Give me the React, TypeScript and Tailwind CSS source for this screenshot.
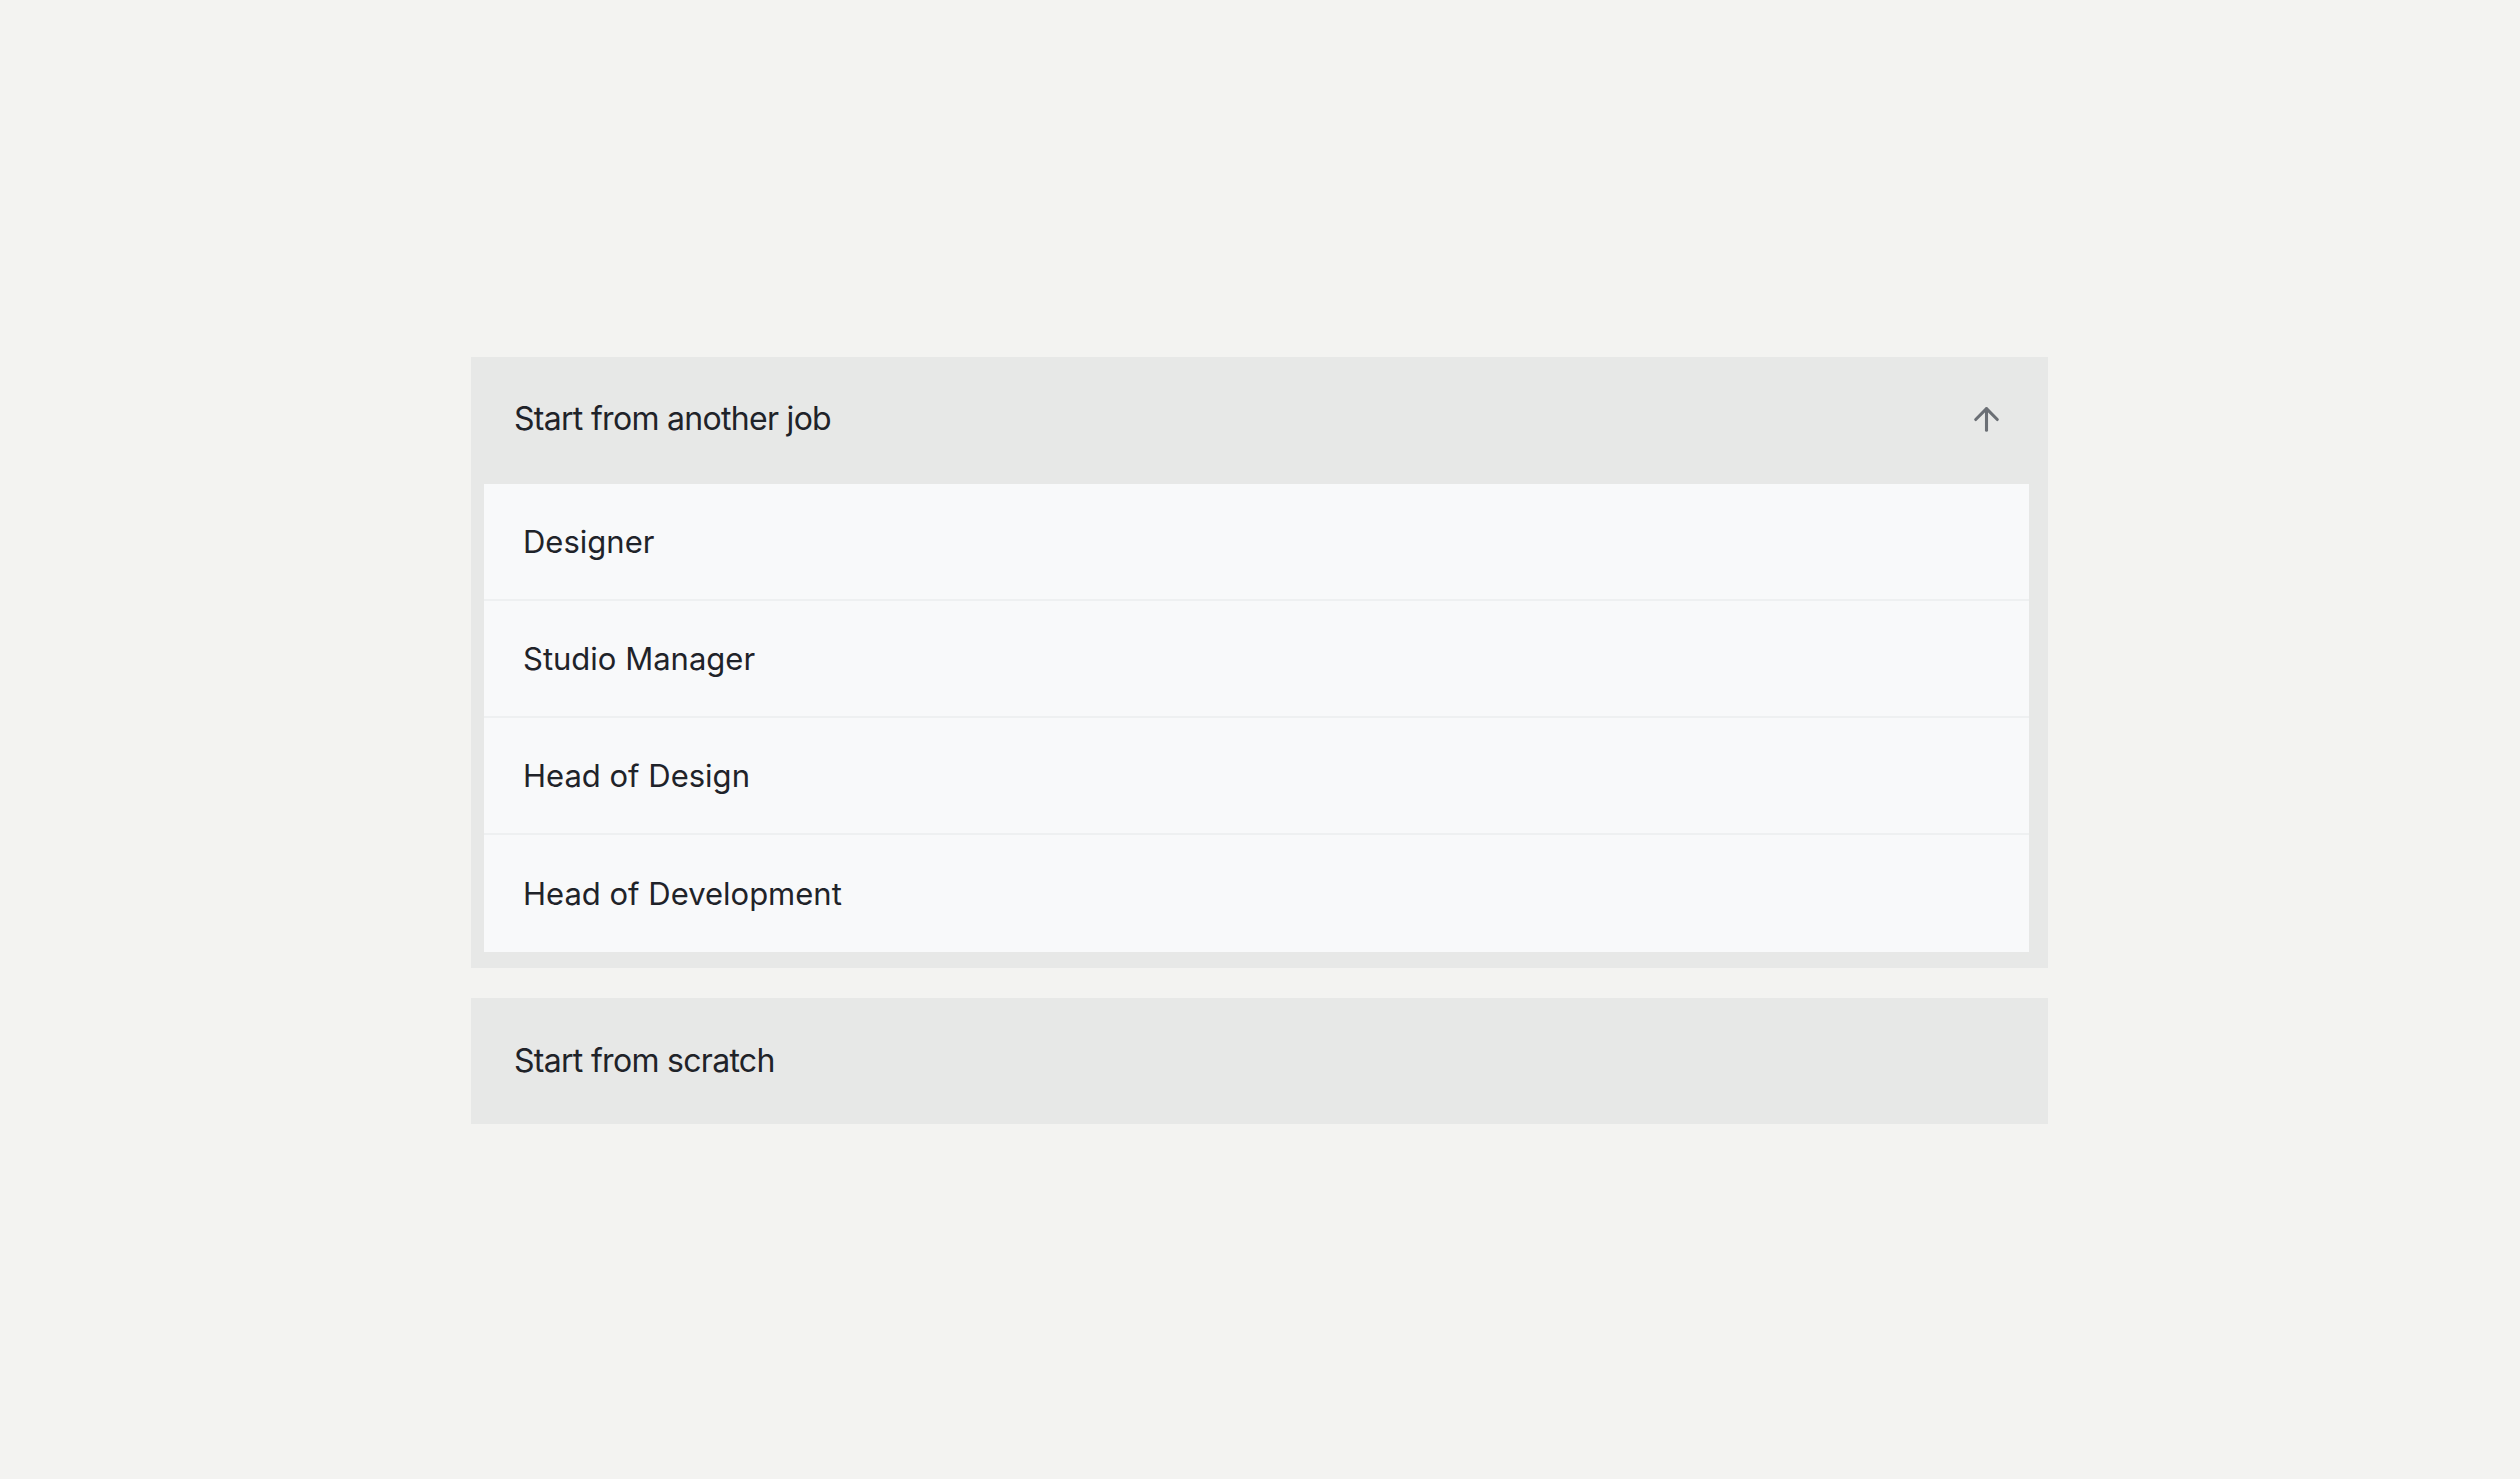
import React from "react";

const items = ["Designer", "Studio Manager", "Head of Design", "Head of Development"];

export default function App() {
  return (
    <div
      className="min-h-[1479px] w-full bg-[#f3f3f1] pt-[357px] pl-[471px]"
      style={{ fontFamily: "Inter, 'Noto Sans', sans-serif" }}
    >
      <div className="w-[1577px]">
        <div className="bg-[#e7e8e7] pb-[16px]">
          <div className="flex h-[127px] items-center justify-between px-[43px]">
            <span className="mb-[3px] text-[32px] text-[#1f2329] tracking-[-0.7px]">Start from another job</span>
            <svg
              width="37"
              height="37"
              viewBox="0 0 24 24"
              fill="none"
              stroke="#6b6f75"
              strokeWidth="2"
              strokeLinecap="round"
              strokeLinejoin="round"
              className="mb-[3px]"
            >
              <path d="M12 19V5" />
              <path d="M5 12l7-7 7 7" />
            </svg>
          </div>
          <div className="ml-[13px] mr-[19px] flex flex-col bg-[#f8f9fa]">
            {items.map((t, i) => (
              <div
                key={t}
                className={`flex h-[117px] items-center pl-[39px] text-[31px] text-[#1f2329] ${
                  i < items.length - 1 ? "border-b-2 border-[#eef0f1]" : ""
                }`}
              >
                <span className="pt-[2px]">{t}</span>
              </div>
            ))}
          </div>
        </div>
        <div className="mt-[30px] flex h-[126px] items-center bg-[#e7e8e7] px-[43px]">
          <span className="text-[32px] text-[#1f2329] tracking-[-0.7px]">Start from scratch</span>
        </div>
      </div>
    </div>
  );
}
